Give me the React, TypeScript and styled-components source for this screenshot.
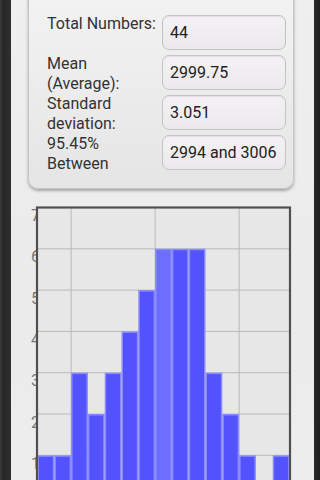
import React, { FC } from "react"
import styled, { createGlobalStyle } from "styled-components"

const GlobalStyle = createGlobalStyle`
  html, body {
    margin: 0;
    padding: 0;
    background: #2a2a2a;
  }
`

const Screen = styled.div`
  width: 320px;
  height: 480px;
  overflow: hidden;
  display: flex;
  background: linear-gradient(
    to right,
    #3c3c3c 0,
    #262626 3px,
    #2e2e2e 10px,
    #2e2e2e 310px,
    #262626 316px,
    #1e1e1e 320px
  );
  font-family: Roboto, "Open Sans", sans-serif;
`

const Panel = styled.div`
  margin: 0 8px 0 11px;
  flex: 1;
  display: flex;
  flex-direction: column;
  background: linear-gradient(#efefef, #ebebeb 60%, #ededed);
`

const Card = styled.div`
  margin: -12px 20px 0 17px;
  padding: 26px 7px 18px 18px;
  border-radius: 10px;
  border: 1px solid #c6c6c6;
  background: linear-gradient(#f3f3f3, #e5e5e5);
  box-shadow: 0 2px 3px rgba(0, 0, 0, 0.3);
  display: grid;
  grid-template-columns: 115px 124px;
  grid-auto-rows: 35px;
  row-gap: 5px;
`

const Label = styled.div`
  font-size: 16px;
  line-height: 20px;
  color: #333;
  margin-top: -1px;
`

const ValueBox = styled.div`
  display: flex;
  align-items: center;
  padding: 0 0 0 7px;
  font-size: 16px;
  color: #222;
  border: 1px solid #c4c4c4;
  border-radius: 7px;
  background: linear-gradient(#f4f2f4, #ebe9eb);
  box-shadow: inset 0 1px 1px rgba(0, 0, 0, 0.08);
  white-space: nowrap;
  overflow: hidden;
`

const ChartWrap = styled.div`
  margin: 12px 0 0 15px;
  width: 286px;
  height: 290px;
`

const stats = [
  { label: "Total Numbers:", value: "44" },
  { label: "Mean\n(Average):", value: "2999.75" },
  { label: "Standard\ndeviation:", value: "3.051" },
  { label: "95.45%\nBetween", value: "2994 and 3006" }
]

const counts = [1, 1, 3, 2, 3, 4, 5, 6, 6, 6, 3, 2, 1, 0, 1]

// chart coordinates, origin at page (26, 200)
const left = 11
const right = 264
const top = 6.5
const unit = 41.3
const yOf = (v: number) => top + (7 - v) * unit
const binW = (right - 0.5 - (left + 0.5)) / counts.length

const Histogram: FC = () => (
  <svg width={286} height={290} viewBox='0 0 286 290'>
    {[7, 6, 5, 4, 3, 2, 1].map((v) => (
      <text
        key={v}
        x={5}
        y={yOf(v) + 13.5}
        fontSize={16}
        fill='#777'
        fontFamily='Roboto, sans-serif'
      >
        {v}
      </text>
    ))}
    <rect x={left} y={top} width={right - left} height={300} fill='#e7e7e7' />
    {[6, 5, 4, 3, 2, 1].map((v) => (
      <line
        key={v}
        x1={left}
        x2={right}
        y1={yOf(v)}
        y2={yOf(v)}
        stroke='#b9b9b9'
        strokeWidth={1}
      />
    ))}
    {[2, 7, 12].map((i) => (
      <line
        key={i}
        x1={left + 0.5 + i * binW}
        x2={left + 0.5 + i * binW}
        y1={top}
        y2={300}
        stroke='#b9b9b9'
        strokeWidth={1}
      />
    ))}
    {counts.map((c, i) =>
      c > 0 ? (
        <rect
          key={i}
          x={left + 0.5 + i * binW + 0.75}
          y={yOf(c) + 0.75}
          width={binW - 1.5}
          height={300}
          fill={i === 7 ? "#6d6dff" : "#5252ff"}
          stroke='#8a8aff'
          strokeWidth={1.5}
        />
      ) : null
    )}
    <rect
      x={left}
      y={top}
      width={right - left}
      height={300}
      fill='none'
      stroke='#505050'
      strokeWidth={2.2}
    />
  </svg>
)

const App: FC = () => (
  <Screen>
    <GlobalStyle />
    <Panel>
      <Card>
        {stats.map((s) => (
          <React.Fragment key={s.label}>
            <Label>
              {s.label.split("\n").map((l) => (
                <div key={l}>{l}</div>
              ))}
            </Label>
            <ValueBox>{s.value}</ValueBox>
          </React.Fragment>
        ))}
      </Card>
      <ChartWrap>
        <Histogram />
      </ChartWrap>
    </Panel>
  </Screen>
)

export default App
